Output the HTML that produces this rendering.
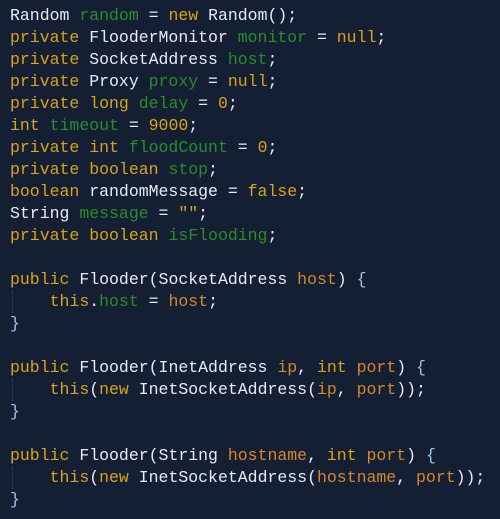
<!DOCTYPE html>
<html><head><meta charset="utf-8"><style>
html,body{margin:0;padding:0;background:#141f33;}
body{width:500px;height:519px;overflow:hidden;position:relative;}
pre{margin:0;position:absolute;left:10px;top:5px;font-family:"Liberation Mono",monospace;font-size:16.5px;line-height:22px;color:#e6ecf5;}
.k{color:#d9a21b}.v{color:#2a8c2a}.p{color:#d8862a}.b{color:#9cc4f0}
.g{position:absolute;left:12px;width:0;border-left:1px dotted #3a4a66;height:22px;}
</style></head><body>
<div class="g" style="top:291px"></div>
<div class="g" style="top:379px"></div>
<div class="g" style="top:467px"></div>
<pre>Random <span class="v">random</span> = <span class="k">new</span> Random();
<span class="k">private</span> FlooderMonitor <span class="v">monitor</span> = <span class="k">null</span>;
<span class="k">private</span> SocketAddress <span class="v">host</span>;
<span class="k">private</span> Proxy <span class="v">proxy</span> = <span class="k">null</span>;
<span class="k">private long</span> <span class="v">delay</span> = <span class="k">0</span>;
<span class="k">int</span> <span class="v">timeout</span> = <span class="k">9000</span>;
<span class="k">private int</span> <span class="v">floodCount</span> = <span class="k">0</span>;
<span class="k">private boolean</span> <span class="v">stop</span>;
<span class="k">boolean</span> randomMessage = <span class="k">false</span>;
String <span class="v">message</span> = <span class="k">""</span>;
<span class="k">private boolean</span> <span class="v">isFlooding</span>;

<span class="k">public</span> Flooder(SocketAddress <span class="p">host</span>) <span class="b">{</span>
    <span class="k">this</span>.<span class="v">host</span> = <span class="p">host</span>;
<span class="b">}</span>

<span class="k">public</span> Flooder(InetAddress <span class="p">ip</span>, <span class="k">int</span> <span class="p">port</span>) <span class="b">{</span>
    <span class="k">this</span>(<span class="k">new</span> InetSocketAddress(<span class="p">ip</span>, <span class="p">port</span>));
<span class="b">}</span>

<span class="k">public</span> Flooder(String <span class="p">hostname</span>, <span class="k">int</span> <span class="p">port</span>) <span class="b">{</span>
    <span class="k">this</span>(<span class="k">new</span> InetSocketAddress(<span class="p">hostname</span>, <span class="p">port</span>));
<span class="b">}</span></pre>
</body></html>
